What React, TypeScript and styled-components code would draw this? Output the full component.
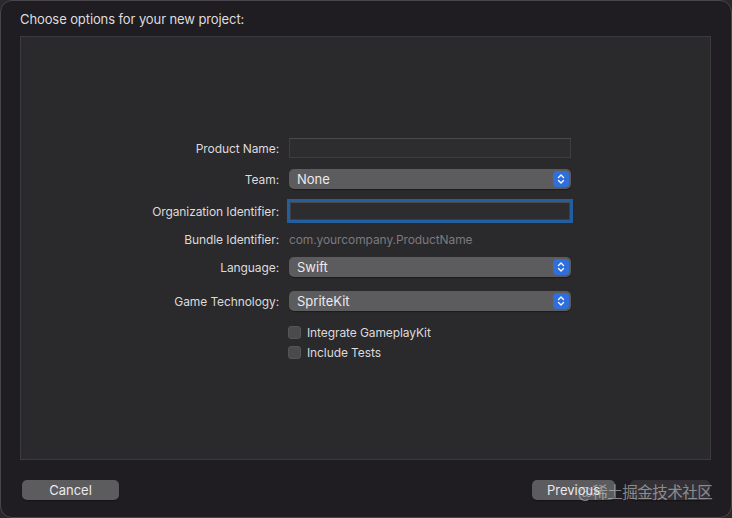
import styled, { createGlobalStyle } from 'styled-components';

const Global = createGlobalStyle`
	html, body {
		margin: 0;
		padding: 0;
		background: #2a282b;
	}
	body {
		font-family: Inter, "Noto Sans", "Liberation Sans", sans-serif;
		-webkit-font-smoothing: antialiased;
	}
`;

const Window = styled.div`
	position: relative;
	box-sizing: border-box;
	width: 732px;
	height: 518px;
	display: flex;
	flex-direction: column;
	background: #1f1d21;
	border: 1px solid #48464a;
	border-radius: 12px;
	padding: 0 20px 0 19px;
	overflow: hidden;
`;

const Title = styled.div`
	height: 35px;
	display: flex;
	align-items: center;
	color: #dedcdf;
	font-size: 13px;
	letter-spacing: -0.1px;
`;

const Panel = styled.div`
	box-sizing: border-box;
	height: 424px;
	background: #2a292b;
	border: 1px solid #3b3a3d;
	padding-top: 101px;
	display: flex;
	flex-direction: column;
`;

const Row = styled.div<{ $top?: number }>`
	display: grid;
	grid-template-columns: 258px 282px;
	column-gap: 10px;
	align-items: center;
	height: 20px;
	margin-top: ${p => p.$top ?? 0}px;
`;

const Label = styled.div`
	text-align: right;
	color: #dcdadd;
	font-size: 12px;
	letter-spacing: -0.1px;
`;

const TextField = styled.div<{ $focused?: boolean }>`
	box-sizing: border-box;
	height: ${p => (p.$focused ? 18 : 20)}px;
	margin: ${p => (p.$focused ? '0 1px' : '0')};
	background: #2d2c2f;
	border: 1px solid #3e3d40;
	border-top-color: #4a494c;
	box-shadow: ${p => (p.$focused ? '0 0 0 3px #235f9e' : 'none')};
`;

const Plain = styled.div`
	color: #7b7a7d;
	font-size: 12px;
	letter-spacing: -0.1px;
`;

const Popup = styled.div`
	box-sizing: border-box;
	height: 20px;
	display: flex;
	align-items: center;
	justify-content: space-between;
	padding: 0 2px 0 8px;
	background: #5c5b5e;
	border-radius: 5px;
	color: #ebe9ec;
	font-size: 13px;
	box-shadow: 0 1px 1px rgba(0, 0, 0, 0.35);
`;

const Stepper = styled.div`
	width: 16px;
	height: 16px;
	border-radius: 4px;
	background: #2f6fdc;
	display: flex;
	align-items: center;
	justify-content: center;
`;

const CheckRow = styled.label`
	grid-column: 2;
	display: flex;
	align-items: center;
	gap: 6px;
	margin-left: -1px;
	color: #dcdadd;
	font-size: 12px;
	letter-spacing: -0.1px;
`;

const Box = styled.span`
	box-sizing: border-box;
	width: 13px;
	height: 13px;
	border-radius: 3px;
	background: #4a494c;
	border: 1px solid #555457;
`;

const Footer = styled.div`
	flex: 1;
	display: flex;
	align-items: center;
	padding: 3px 1px 0 2px;
	gap: 15px;
`;

const Button = styled.div<{ $w: number; $disabled?: boolean }>`
	box-sizing: border-box;
	width: ${p => p.$w}px;
	height: 20px;
	display: flex;
	align-items: center;
	justify-content: center;
	border-radius: 5px;
	background: ${p => (p.$disabled ? '#333136' : '#5c5b5e')};
	color: #ebe9ec;
	font-size: 13px;
	box-shadow: 0 1px 1px rgba(0, 0, 0, 0.35);
`;

const Spacer = styled.div`
	flex: 1;
`;

const Watermark = styled.div`
	position: absolute;
	left: 577px;
	top: 479px;
	font-family: "Noto Sans CJK SC", sans-serif;
	font-size: 15.5px;
	color: rgba(220, 220, 220, 0.55);
	letter-spacing: -0.5px;
	pointer-events: none;
`;

function Chevrons() {
	return (
		<svg width="8" height="12" viewBox="0 0 8 12">
			<path d="M1.5 4.5 L4 2 L6.5 4.5 M1.5 7.5 L4 10 L6.5 7.5" fill="none" stroke="#fff" strokeWidth="1.3" strokeLinecap="round" strokeLinejoin="round" />
		</svg>
	);
}

function Select({ value }: { value: string }) {
	return (
		<Popup>
			<span>{value}</span>
			<Stepper>
				<Chevrons />
			</Stepper>
		</Popup>
	);
}

export default function App() {
	return (
		<>
			<Global />
			<Window>
				<Title>Choose options for your new project:</Title>
				<Panel>
					<Row>
						<Label>Product Name:</Label>
						<TextField />
					</Row>
					<Row $top={11}>
						<Label>Team:</Label>
						<Select value="None" />
					</Row>
					<Row $top={12}>
						<Label>Organization Identifier:</Label>
						<TextField $focused />
					</Row>
					<Row $top={8}>
						<Label>Bundle Identifier:</Label>
						<Plain>com.yourcompany.ProductName</Plain>
					</Row>
					<Row $top={8}>
						<Label>Language:</Label>
						<Select value="Swift" />
					</Row>
					<Row $top={14}>
						<Label>Game Technology:</Label>
						<Select value="SpriteKit" />
					</Row>
					<Row $top={11}>
						<CheckRow>
							<Box />
							Integrate GameplayKit
						</CheckRow>
					</Row>
					<Row>
						<CheckRow>
							<Box />
							Include Tests
						</CheckRow>
					</Row>
				</Panel>
				<Footer>
					<Button $w={97}>Cancel</Button>
					<Spacer />
					<Button $w={83}>Previous</Button>
					<Button $w={80} $disabled />
				</Footer>
				<Watermark>@稀土掘金技术社区</Watermark>
			</Window>
		</>
	);
}
